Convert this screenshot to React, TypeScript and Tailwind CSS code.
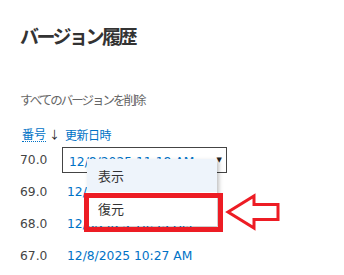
const rows = [
  { no: '70.0', date: '12/8/2025 11:18 AM' },
  { no: '69.0', date: '12/8/2025 11:02 AM' },
  { no: '68.0', date: '12/8/2025 10:45 AM' },
  { no: '67.0', date: '12/8/2025 10:27 AM' },
];

const jp = { fontFamily: "'Noto Sans CJK JP', sans-serif" };
const latin = { fontFamily: "'DejaVu Sans', 'Noto Sans CJK JP', sans-serif" };

const App = () => {
  return (
    <div className="relative w-[344px] h-[275px] overflow-hidden bg-white text-[#444]">
      <div className="flex flex-col pl-5">
        {/* Title */}
        <h1 style={jp} className="mt-[22px] h-[28px] leading-[28px] text-[19px] font-semibold tracking-[-2.5px] text-[#333]">
          バージョン履歴
        </h1>

        <div style={jp} className="mt-[42px] h-[16px] leading-[16px] text-[12.5px] tracking-[-2px] text-[#666]">
          すべてのバージョンを削除
        </div>

        {/* Column headers */}
        <div style={jp} className="mt-[17px] flex items-center h-[19px] text-[12px] text-[#0072c6]">
          <span className="w-[45px] flex items-center">
            <span className="ml-[2px] border-b border-dotted border-[#0072c6] leading-[14px]">番号</span>
            <span className="ml-[3px] text-[#222] text-[11px]">↓</span>
          </span>
          <span className="tracking-[-0.5px]">更新日時</span>
        </div>

        {/* Rows */}
        <div className="flex flex-col">
          {rows.map((r, i) => (
            <div key={r.no} style={latin} className="flex items-center h-[32px] text-[12.3px]">
              <span className="w-[42px] text-[#444]">{r.no}</span>
              {i === 0 ? (
                <div className="relative flex items-center w-[165px] h-[26px] border border-[#444] pl-[6px] pr-[4px]">
                  <span className="pt-[4px] text-[#0072c6]">{r.date}</span>
                  <span className="ml-auto text-[#222] text-[7px] leading-none">▼</span>

                  {/* Context menu */}
                  <div style={jp} className="absolute left-[24px] top-[11px] z-10 w-[130px] bg-white shadow-[2px_2px_4px_rgba(0,0,0,0.25)] text-[13px] text-[#333]">
                    <div className="h-[33px] flex items-center pl-[11px] bg-[#eef4fb]">表示</div>
                    <div className="h-[34px] flex items-center pl-[11px]">復元</div>
                  </div>
                </div>
              ) : (
                <span className="ml-[5px] text-[#0072c6]">{r.date}</span>
              )}
            </div>
          ))}
        </div>
      </div>

      {/* Annotation: red highlight and arrow */}
      <div className="absolute left-[84px] top-[193px] w-[139px] h-[39px] border-[5px] border-[#ed1c24] z-20" />
      <svg className="absolute left-[225px] top-[193px] z-20" width="56" height="38" viewBox="0 0 56 38">
        <polygon
          points="3,19 29,3 29,11.5 53,11.5 53,26.5 29,26.5 29,35"
          fill="none"
          stroke="#ed1c24"
          strokeWidth="3"
          strokeLinejoin="miter"
        />
      </svg>
    </div>
  );
};

export default App;
